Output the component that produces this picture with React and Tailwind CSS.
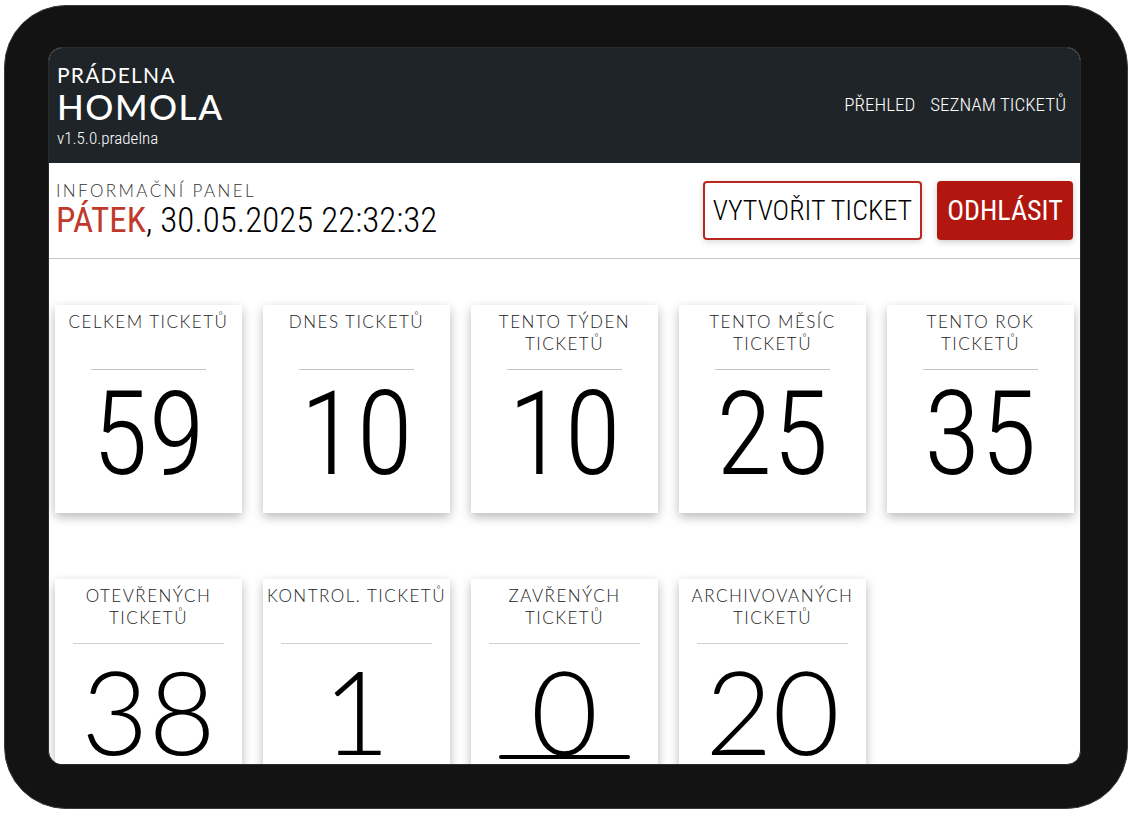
import React from "react";

const COND = { fontFamily: '"Roboto Condensed", "Liberation Sans Narrow", Roboto, sans-serif', fontStretch: "condensed" };
const GEO = { fontFamily: 'Lato, "Open Sans", sans-serif' };

const rowOne = [
    { title: ["CELKEM TICKETŮ"], value: 59 },
    { title: ["DNES TICKETŮ"], value: 10 },
    { title: ["TENTO TÝDEN", "TICKETŮ"], value: 10 },
    { title: ["TENTO MĚSÍC", "TICKETŮ"], value: 25 },
    { title: ["TENTO ROK", "TICKETŮ"], value: 35 },
];

const rowTwo = [
    { title: ["OTEVŘENÝCH", "TICKETŮ"], value: 38 },
    { title: ["KONTROL. TICKETŮ"], value: 1 },
    { title: ["ZAVŘENÝCH", "TICKETŮ"], value: 0, link: true },
    { title: ["ARCHIVOVANÝCH", "TICKETŮ"], value: 20 },
];

const StatCard = ({ title, value, condensed, link }) => (
    <div className="w-[187px] h-[208px] bg-white shadow-[0_4px_10px_rgba(0,0,0,0.28)] flex flex-col items-center pt-[6px] shrink-0">
        <div className="h-[58px] text-[17px] leading-[22px] text-center text-[#222] tracking-[1.5px] font-light whitespace-nowrap" style={GEO}>
            {title.map(t => <div key={t}>{t}</div>)}
        </div>
        <div className={condensed ? "w-[115px] border-t border-[#c4c4c4]" : "w-[151px] border-t border-[#d0d0d0]"} />
        {condensed ? (
            <div className="mt-[4px] text-[116px] leading-[120px] font-light text-black" style={COND}>{value}</div>
        ) : (
            <div className="relative mt-[11px] text-[116px] leading-[112px] font-light text-black" style={GEO}>
                {value}
                {link && <span className="absolute left-[-32px] right-[-32px] bottom-[8px] h-[4px] bg-black rounded-full" />}
            </div>
        )}
    </div>
);

export default function App() {
    return (
        <div className="w-[1134px] h-[821px] bg-white pt-[5px] pl-[4px]">
            <div className="w-[1124px] h-[804px] rounded-[62px] bg-[#131313] border border-[#3c3c3c] pt-[41px] pl-[43px]">
                <div className="w-[1033px] h-[718px] rounded-[14px] overflow-hidden bg-white flex flex-col border border-[#2a2a2a]">
                    <header className="h-[115px] shrink-0 bg-[#1e2427] flex items-center justify-between pl-[8px] pr-[14px]">
                        <div className="text-white pt-[2px]">
                            <div className="text-[21px] leading-[24px] tracking-[1.2px]" style={GEO}>PRÁDELNA</div>
                            <div className="text-[35px] leading-[38px] tracking-[1.5px] font-medium" style={GEO}>HOMOLA</div>
                            <div className="text-[17px] leading-[24px] mt-[1px] font-light" style={COND}>v1.5.0.pradelna</div>
                        </div>
                        <nav className="flex gap-[15px] text-white text-[19px] font-light" style={COND}>
                            <span>PŘEHLED</span>
                            <span>SEZNAM TICKETŮ</span>
                        </nav>
                    </header>
                    <div className="h-[96px] shrink-0 border-b border-[#c8c8c8] flex items-center justify-between pl-[7px] pr-[7px]">
                        <div>
                            <div className="text-[17px] leading-[20px] text-[#333] tracking-[2.4px] font-light" style={GEO}>INFORMAČNÍ PANEL</div>
                            <div className="text-[35px] leading-[40px] text-black font-light" style={COND}>
                                <span className="text-[#c0392b] font-normal">PÁTEK</span>, 30.05.2025 22:32:32
                            </div>
                        </div>
                        <div className="flex gap-[15px]">
                            <button className="w-[219px] h-[59px] border-2 border-[#b8281e] rounded-[4px] bg-white shadow-[0_2px_6px_rgba(0,0,0,0.15)] text-[28px] text-black font-light" style={COND}>VYTVOŘIT TICKET</button>
                            <button className="w-[136px] h-[59px] rounded-[4px] bg-[#b2170f] shadow-[0_2px_6px_rgba(0,0,0,0.2)] text-[28px] text-white font-normal" style={COND}>ODHLÁSIT</button>
                        </div>
                    </div>
                    <div className="flex-1 overflow-hidden pl-[6px] pt-[46px]">
                        <div className="flex gap-[21px]">
                            {rowOne.map(c => <StatCard key={c.title.join()} {...c} condensed />)}
                        </div>
                        <div className="flex gap-[21px] mt-[66px]">
                            {rowTwo.map(c => <StatCard key={c.title.join()} {...c} />)}
                        </div>
                    </div>
                </div>
            </div>
        </div>
    );
}
